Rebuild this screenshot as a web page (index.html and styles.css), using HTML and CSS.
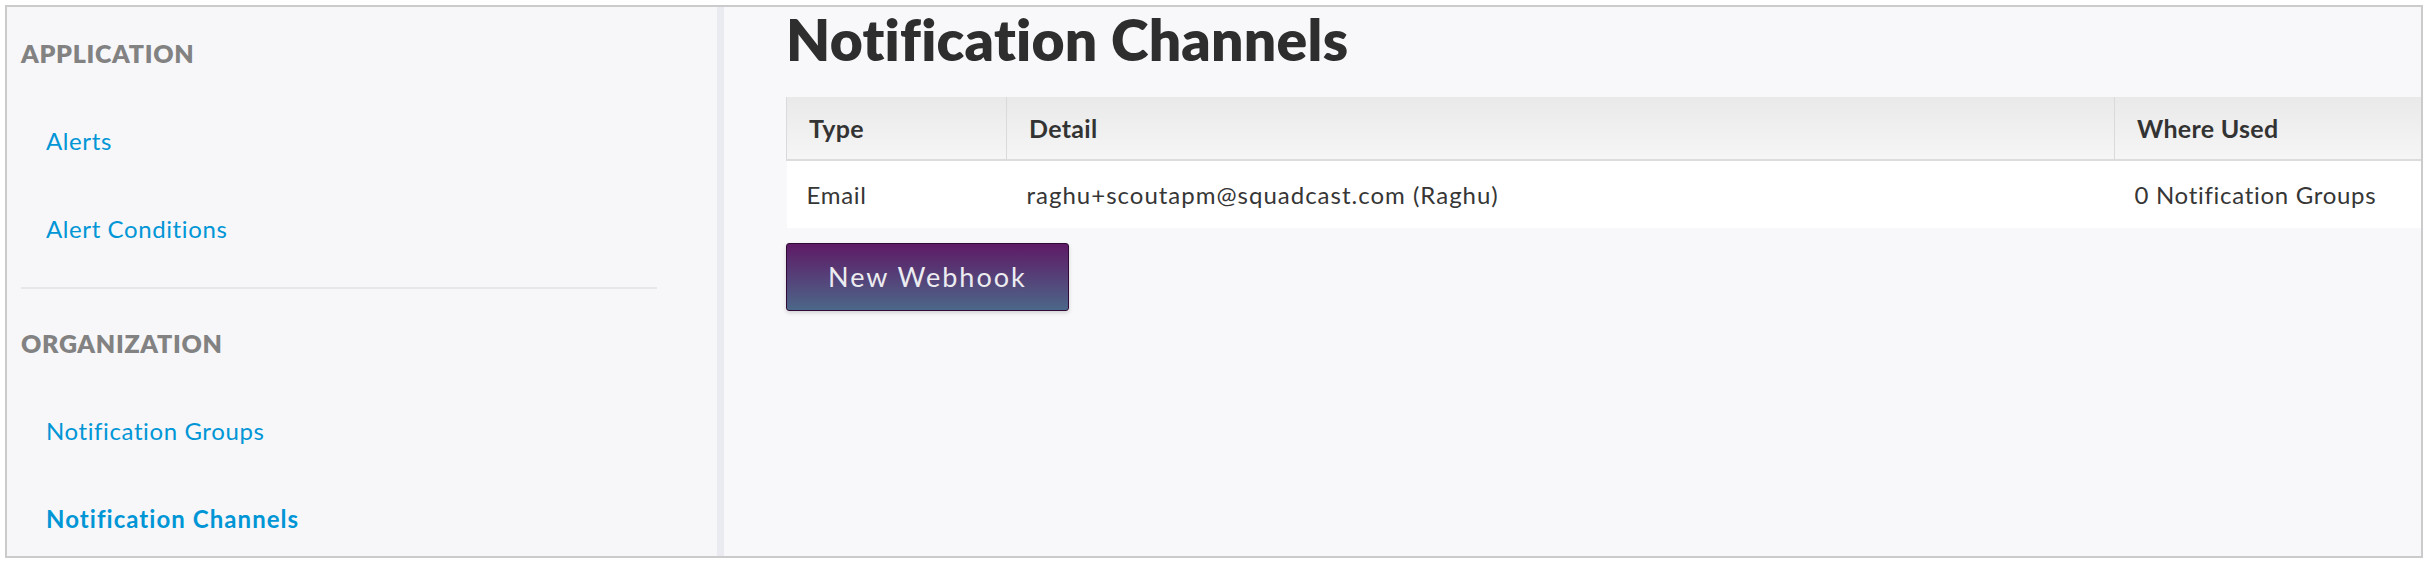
FILE: index.html
```html
<!DOCTYPE html>
<html>
<head>
<meta charset="utf-8">
<link rel="stylesheet" href="styles.css">
</head>
<body>
<div class="frame">
  <aside class="sidebar">
    <div class="nav-section">
      <div class="nav-title">APPLICATION</div>
      <a class="nav-link" href="#">Alerts</a>
      <a class="nav-link" href="#">Alert Conditions</a>
    </div>
    <div class="nav-section nav-section-divided">
      <div class="nav-title">ORGANIZATION</div>
      <a class="nav-link" href="#">Notification Groups</a>
      <a class="nav-link active" href="#">Notification Channels</a>
    </div>
  </aside>
  <main class="content">
    <h1 class="page-title">Notification Channels</h1>
    <table class="channels">
      <thead>
        <tr>
          <th class="col-type">Type</th>
          <th class="col-detail">Detail</th>
          <th class="col-used">Where Used</th>
        </tr>
      </thead>
      <tbody>
        <tr>
          <td>Email</td>
          <td class="cell-detail">raghu+scoutapm@squadcast.com (Raghu)</td>
          <td>0 Notification Groups</td>
        </tr>
      </tbody>
    </table>
    <button class="btn-webhook" type="button">New Webhook</button>
  </main>
</div>
</body>
</html>
```
FILE: styles.css
```css
html, body {
  margin: 0;
  padding: 0;
  background: #ffffff;
}
body {
  padding: 5px;
  font-family: "Lato", "Liberation Sans", sans-serif;
}
.frame {
  box-sizing: border-box;
  width: 2418px;
  height: 553px;
  border: 2px solid #cbcbcb;
  display: flex;
  overflow: hidden;
  background: #f8f8fa;
}
.sidebar {
  flex: 0 0 710px;
  border-right: 7px solid #e9ebf0;
  background: #f7f7f9;
  padding-top: 2px;
  box-sizing: content-box;
}
.nav-section {
  display: flex;
  flex-direction: column;
}
.nav-section-divided {
  margin: 14px 60px 0 14px;
  border-top: 2px solid #e6e7eb;
  padding-top: 10px;
}
.nav-section-divided .nav-title {
  padding-left: 0;
}
.nav-section-divided .nav-link {
  padding-left: 25px;
}
.nav-title {
  padding: 29px 0 29px 14px;
  font-size: 25px;
  line-height: 30px;
  font-weight: 800;
  letter-spacing: 0.7px;
  color: #828282;
}
.nav-link {
  padding: 29px 0 29px 39px;
  font-size: 24px;
  line-height: 30px;
  letter-spacing: 0.6px;
  color: #0096d6;
  text-decoration: none;
}
.nav-link.active {
  font-weight: 700;
  letter-spacing: 1.05px;
}
.content {
  flex: 1 1 auto;
  min-width: 0;
  padding: 4px 0 0 62px;
}
.page-title {
  margin: 0 0 29px 0;
  font-size: 57px;
  line-height: 57px;
  font-weight: 800;
  letter-spacing: 0.25px;
  color: #2e2e2e;
}
.channels {
  width: 100%;
  border-collapse: collapse;
  font-size: 24px;
  letter-spacing: 0.7px;
  color: #363636;
}
.channels th {
  text-align: left;
  font-weight: 700;
  font-size: 25px;
  line-height: 30px;
  letter-spacing: 0.3px;
  padding: 16px 20px 16px 22px;
  background: linear-gradient(#e9e9e9, #f5f5f5);
  border-bottom: 2px solid #dcdcdc;
  border-left: 1px solid #dadada;
  color: #333333;
}
.channels .col-type { width: 177px; }
.channels .col-used { width: 264px; }
.channels td {
  background: #ffffff;
  line-height: 30px;
  padding: 18.5px 20px 18.5px 20px;
}
.channels .cell-detail {
  letter-spacing: 1px;
}
.btn-webhook {
  margin-top: 15px;
  padding: 17px 41px;
  border: 1px solid #300b36;
  border-radius: 3px;
  background: linear-gradient(#5e1a66, #4c6789);
  color: #ececf0;
  font-family: "Lato", "Liberation Sans", sans-serif;
  font-size: 27px;
  line-height: 32px;
  letter-spacing: 2px;
  box-shadow: 0 2px 4px rgba(0, 0, 0, 0.15);
}
```
